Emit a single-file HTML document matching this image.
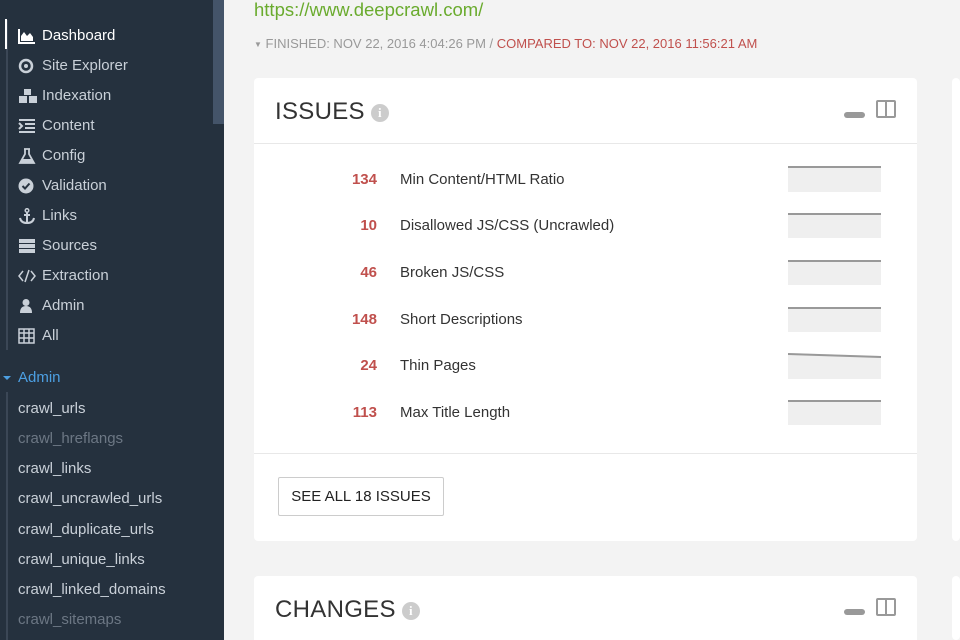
<!DOCTYPE html>
<html><head><meta charset="utf-8"><style>
*{margin:0;padding:0;box-sizing:border-box}
html,body{width:960px;height:640px;overflow:hidden}
body{background:#f3f3f3;font-family:"Liberation Sans",sans-serif;position:relative}
#sb{position:absolute;left:0;top:0;width:224px;height:640px;background:#25313e}
#sb .scroll{position:absolute;left:213px;top:0;width:11px;height:124px;background:#445469}
.vl{position:absolute;left:6px;width:2px;background:#3b4756}
.it{position:absolute;left:18px;font-size:15px;color:#c9d0d8;height:20px;line-height:20px;white-space:nowrap}
.it svg{position:absolute;left:0;top:2px}
.it span{position:absolute;left:24px}
.sub{position:absolute;left:18px;font-size:15px;color:#c9d0d8;line-height:20px}
.dim{color:#6c7784}
.card{position:absolute;background:#fff;border-radius:4px}
.ttl{position:absolute;left:21px;font-size:24px;color:#333;letter-spacing:0.3px}
.info{display:inline-block;width:18px;height:18px;border-radius:50%;background:#ccc;color:#fff;font-size:13px;font-weight:bold;text-align:center;line-height:18px;vertical-align:2px;margin-left:6px;font-family:"Liberation Serif",serif;letter-spacing:0}
.row{position:absolute;left:0;width:663px;height:24px;line-height:24px;font-size:15px}
.row .n{position:absolute;right:540px;color:#c0504d;font-weight:bold}
.row .l{position:absolute;left:146px;color:#333}
.min{position:absolute;width:21px;height:6px;border-radius:3px;background:#999}
.col{position:absolute;width:20px;height:18px;border:2px solid #999;border-radius:2px}
.col:after{content:"";position:absolute;left:7px;top:0;width:2px;height:14px;background:#999}
</style></head><body>
<div id="sb">
<div class="scroll"></div>
<div class="vl" style="top:20px;height:330px"></div>
<div style="position:absolute;left:5px;top:19px;width:2px;height:30px;background:#fff"></div>
<div class="it" style="top:26px;color:#fff"><svg width="18" height="16"><path d="M1 1V15H17" stroke="#fff" stroke-width="2" fill="none"/><path d="M3 13V8L6 4L9 8L12 5L15 9V13Z" fill="#fff"/></svg><span>Dashboard</span></div>
<div class="it" style="top:56px"><svg width="18" height="16"><circle cx="8" cy="8" r="6" stroke="#c9d0d8" stroke-width="2.5" fill="none"/><circle cx="8" cy="8" r="2" fill="#c9d0d8"/></svg><span>Site Explorer</span></div>
<div class="it" style="top:86px"><svg width="20" height="16"><rect x="6" y="1" width="7" height="6" fill="#c9d0d8"/><rect x="1" y="8" width="8" height="7" fill="#c9d0d8"/><rect x="11" y="8" width="8" height="7" fill="#c9d0d8"/></svg><span>Indexation</span></div>
<div class="it" style="top:116px"><svg width="18" height="16"><path d="M1 2H17M7 6H17M7 10H17M1 14H17M1 5L4 8L1 11" stroke="#c9d0d8" stroke-width="2" fill="none"/></svg><span>Content</span></div>
<div class="it" style="top:146px"><svg width="18" height="16"><path d="M6 1H12M7 1V6L2 15H16L11 6V1" stroke="#c9d0d8" stroke-width="1.8" fill="none"/><path d="M4 11H14L16 15H2Z" fill="#c9d0d8"/></svg><span>Config</span></div>
<div class="it" style="top:176px"><svg width="18" height="16"><circle cx="8" cy="8" r="7.5" fill="#c9d0d8"/><path d="M4.5 8L7 10.5L11.5 5.5" stroke="#25313e" stroke-width="2" fill="none"/></svg><span>Validation</span></div>
<div class="it" style="top:206px"><svg width="18" height="16"><circle cx="9" cy="2.5" r="1.8" stroke="#c9d0d8" stroke-width="1.5" fill="none"/><path d="M9 4V15M6 7H12M2 10Q3 15 9 15Q15 15 16 10" stroke="#c9d0d8" stroke-width="2" fill="none"/></svg><span>Links</span></div>
<div class="it" style="top:236px"><svg width="18" height="16"><rect x="1" y="1" width="16" height="4" fill="#c9d0d8"/><rect x="1" y="6" width="16" height="4" fill="#c9d0d8"/><rect x="1" y="11" width="16" height="4" fill="#c9d0d8"/></svg><span>Sources</span></div>
<div class="it" style="top:266px"><svg width="18" height="16"><path d="M5 3L1 8L5 13M13 3L17 8L13 13M11 2L7 14" stroke="#c9d0d8" stroke-width="1.5" fill="none"/></svg><span>Extraction</span></div>
<div class="it" style="top:296px"><svg width="18" height="16"><circle cx="8" cy="4.5" r="3.5" fill="#c9d0d8"/><path d="M2 15Q2 8 8 8Q14 8 14 15Z" fill="#c9d0d8"/></svg><span>Admin</span></div>
<div class="it" style="top:326px"><svg width="18" height="16"><path d="M1 1H16V15H1ZM1 5H16M1 10H16M6 1V15M11 1V15" stroke="#c9d0d8" stroke-width="1.5" fill="none"/></svg><span>All</span></div>
<div style="position:absolute;left:3px;top:376px;width:0;height:0;border-left:4px solid transparent;border-right:4px solid transparent;border-top:4px solid #4c9fe2"></div>
<div class="sub" style="top:368px;color:#4c9fe2">Admin</div>
<div class="vl" style="top:392px;height:248px"></div>
<div class="sub" style="top:399px">crawl_urls</div>
<div class="sub dim" style="top:429px">crawl_hreflangs</div>
<div class="sub" style="top:459px">crawl_links</div>
<div class="sub" style="top:489px">crawl_uncrawled_urls</div>
<div class="sub" style="top:520px">crawl_duplicate_urls</div>
<div class="sub" style="top:550px">crawl_unique_links</div>
<div class="sub" style="top:580px">crawl_linked_domains</div>
<div class="sub dim" style="top:610px">crawl_sitemaps</div>
</div>

<div style="position:absolute;left:254px;top:0px;font-size:18.5px;color:#6aab2e;line-height:20px">https://www.deepcrawl.com/</div>
<div style="position:absolute;left:254px;top:37px;font-size:13px;color:#999;line-height:14px;white-space:nowrap"><span style="font-size:8px;vertical-align:1px">▼</span> FINISHED: NOV 22, 2016 4:04:26 PM / <span style="color:#c0504d">COMPARED TO: NOV 22, 2016 11:56:21 AM</span></div>

<div class="card" style="left:254px;top:78px;width:663px;height:463px">
<div class="ttl" style="top:20px">ISSUES<span class="info">i</span></div>
<div class="min" style="left:590px;top:34px"></div>
<div class="col" style="left:622px;top:22px"></div>
<div style="position:absolute;left:0;top:65px;width:663px;height:1px;background:#e8e8e8"></div>
<div class="row" style="top:90px"><span class="n">134</span><span class="l">Min Content/HTML Ratio</span></div>
<div class="row" style="top:136px"><span class="n">10</span><span class="l">Disallowed JS/CSS (Uncrawled)</span></div>
<div class="row" style="top:183px"><span class="n">46</span><span class="l">Broken JS/CSS</span></div>
<div class="row" style="top:230px"><span class="n">148</span><span class="l">Short Descriptions</span></div>
<div class="row" style="top:276px"><span class="n">24</span><span class="l">Thin Pages</span></div>
<div class="row" style="top:323px"><span class="n">113</span><span class="l">Max Title Length</span></div>
<svg style="position:absolute;left:534px;top:88px" width="93" height="270">
<g fill="#efefef" stroke="#999" stroke-width="2">
<rect x="0" y="1" width="93" height="25" stroke="none"/><line x1="0" y1="1" x2="93" y2="1"/>
<rect x="0" y="47" width="93" height="25" stroke="none"/><line x1="0" y1="48" x2="93" y2="48"/>
<rect x="0" y="94" width="93" height="25" stroke="none"/><line x1="0" y1="95" x2="93" y2="95"/>
<rect x="0" y="141" width="93" height="25" stroke="none"/><line x1="0" y1="142" x2="93" y2="142"/>
<path d="M0 187L93 190V213H0Z" stroke="none"/><line x1="0" y1="188" x2="93" y2="191"/>
<rect x="0" y="234" width="93" height="25" stroke="none"/><line x1="0" y1="235" x2="93" y2="235"/>
</g></svg>
<div style="position:absolute;left:0;top:375px;width:663px;height:1px;background:#e8e8e8"></div>
<div style="position:absolute;left:24px;top:399px;width:166px;height:39px;border:1px solid #ccc;border-radius:2px;font-size:15px;color:#222;text-align:center;line-height:37px">SEE ALL 18 ISSUES</div>
</div>
<div class="card" style="left:952px;top:78px;width:8px;height:463px"></div>

<div class="card" style="left:254px;top:576px;width:663px;height:64px;border-radius:4px 4px 0 0">
<div class="ttl" style="top:20px">CHANGES<span class="info">i</span></div>
<div class="min" style="left:590px;top:33px"></div>
<div class="col" style="left:622px;top:22px"></div>
</div>
<div class="card" style="left:952px;top:576px;width:8px;height:64px"></div>
</body></html>
